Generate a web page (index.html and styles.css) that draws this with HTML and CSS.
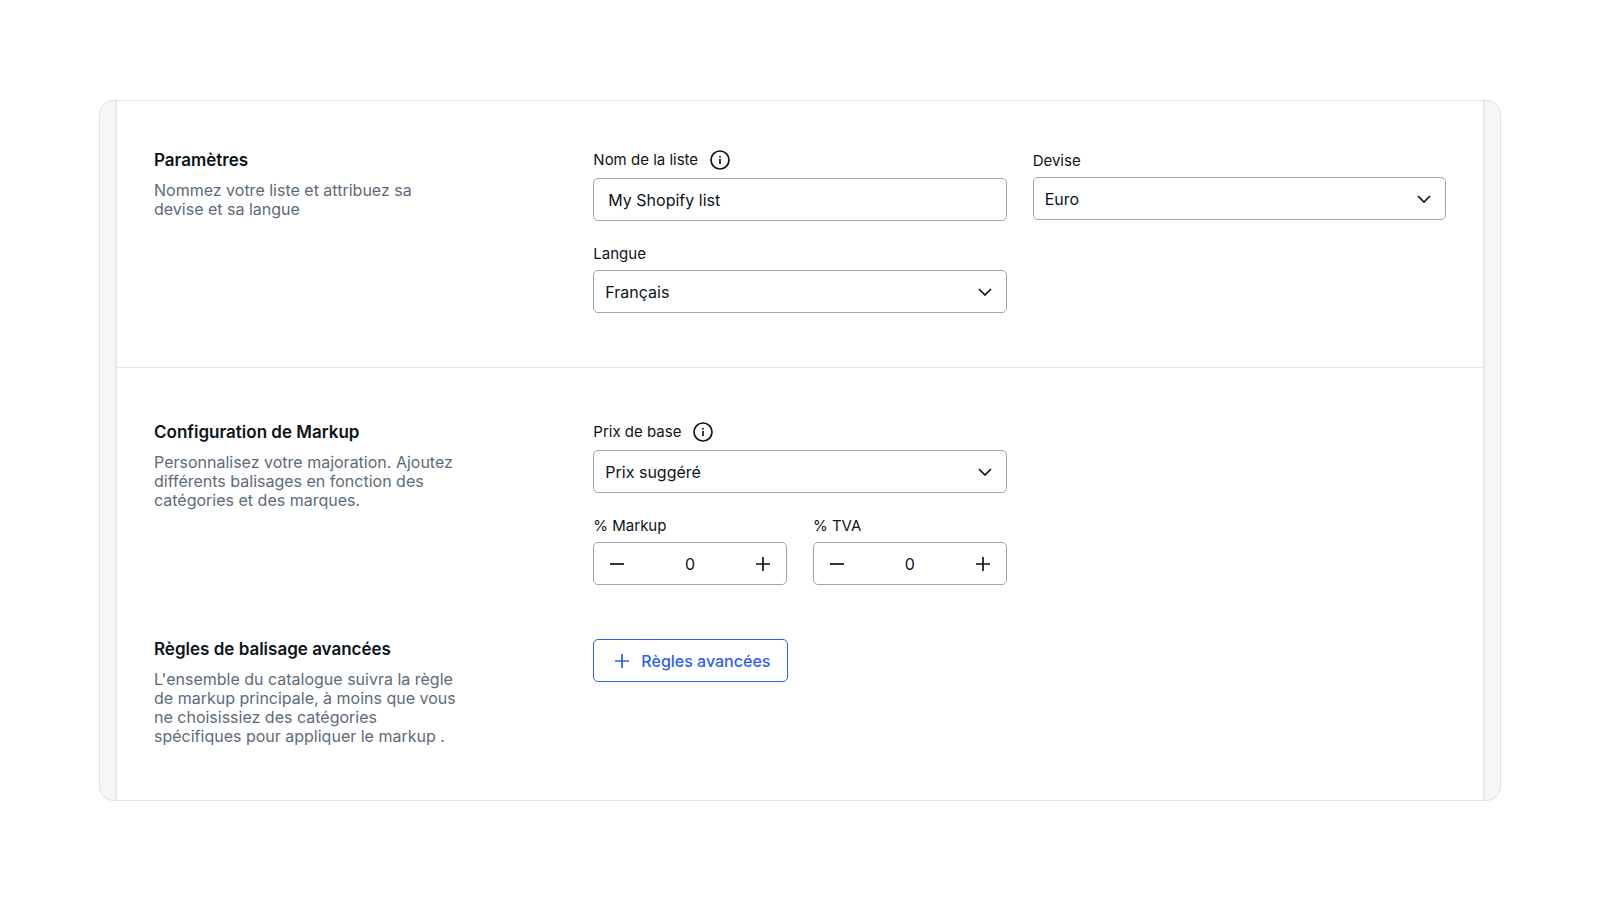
FILE: index.html
```html
<!DOCTYPE html>
<html lang="fr">
<head>
<meta charset="utf-8">
<meta name="viewport" content="width=device-width, initial-scale=1">
<title>Paramètres de la liste</title>
<link rel="stylesheet" href="styles.css">
</head>
<body>
<main class="frame">
  <form class="panel">
    <section class="section section-settings">
      <div class="intro">
        <h2 class="title">Paramètres</h2>
        <p class="description">Nommez votre liste et attribuez sa devise et sa langue</p>
      </div>
      <div class="fields">
        <div class="field">
          <div class="label-row">
            <label class="label" for="list-name">Nom de la liste</label>
            <svg class="info" viewBox="0 0 20 20" aria-hidden="true"><circle cx="10" cy="10" r="9"/><path d="M10 9v5M10 6v1.6"/></svg>
          </div>
          <input class="control text-input" id="list-name" type="text" value="My Shopify list">
        </div>
        <div class="field">
          <label class="label" for="currency">Devise</label>
          <div class="select-wrap">
            <select class="control select" id="currency"><option>Euro</option></select>
            <svg class="chevron" viewBox="0 0 14 8" aria-hidden="true"><path d="M1 1l6 6 6-6"/></svg>
          </div>
        </div>
        <div class="field">
          <label class="label" for="language">Langue</label>
          <div class="select-wrap">
            <select class="control select" id="language"><option>Français</option></select>
            <svg class="chevron" viewBox="0 0 14 8" aria-hidden="true"><path d="M1 1l6 6 6-6"/></svg>
          </div>
        </div>
      </div>
    </section>

    <section class="section section-markup">
      <div class="intro">
        <h2 class="title">Configuration de Markup</h2>
        <p class="description">Personnalisez votre majoration. Ajoutez différents balisages en fonction des catégories et des marques.</p>
      </div>
      <div class="fields">
        <div class="field">
          <div class="label-row">
            <label class="label" for="base-price">Prix de base</label>
            <svg class="info" viewBox="0 0 20 20" aria-hidden="true"><circle cx="10" cy="10" r="9"/><path d="M10 9v5M10 6v1.6"/></svg>
          </div>
          <div class="select-wrap">
            <select class="control select" id="base-price"><option>Prix suggéré</option></select>
            <svg class="chevron" viewBox="0 0 14 8" aria-hidden="true"><path d="M1 1l6 6 6-6"/></svg>
          </div>
        </div>
        <div class="stepper-row">
          <div class="field">
            <label class="label" for="markup">% Markup</label>
            <div class="control stepper">
              <button class="step" type="button" aria-label="Diminuer"><svg viewBox="0 0 16 16" aria-hidden="true"><path d="M1 8h14"/></svg></button>
              <input class="amount" id="markup" type="text" inputmode="numeric" value="0">
              <button class="step" type="button" aria-label="Augmenter"><svg viewBox="0 0 16 16" aria-hidden="true"><path d="M1 8h14M8 1v14"/></svg></button>
            </div>
          </div>
          <div class="field">
            <label class="label" for="vat">% TVA</label>
            <div class="control stepper">
              <button class="step" type="button" aria-label="Diminuer"><svg viewBox="0 0 16 16" aria-hidden="true"><path d="M1 8h14"/></svg></button>
              <input class="amount" id="vat" type="text" inputmode="numeric" value="0">
              <button class="step" type="button" aria-label="Augmenter"><svg viewBox="0 0 16 16" aria-hidden="true"><path d="M1 8h14M8 1v14"/></svg></button>
            </div>
          </div>
        </div>
      </div>
    </section>

    <section class="section section-rules">
      <div class="intro">
        <h2 class="title">Règles de balisage avancées</h2>
        <p class="description">L'ensemble du catalogue suivra la règle de markup principale, à moins que vous ne choisissiez des catégories spécifiques pour appliquer le markup .</p>
      </div>
      <div class="fields">
        <div class="field">
          <button class="rules-button" type="button">
            <svg viewBox="0 0 16 16" aria-hidden="true"><path d="M1 8h14M8 1v14"/></svg>
            Règles avancées
          </button>
        </div>
      </div>
    </section>
  </form>
</main>
</body>
</html>
```
FILE: styles.css
```css
* {
  box-sizing: border-box;
}

body {
  margin: 0;
  padding: 100px 99px;
  background: #fff;
  color: #0b141a;
  font-family: Inter, "Liberation Sans", sans-serif;
  font-size: 16px;
}

button,
input,
select {
  margin: 0;
  color: inherit;
  font: inherit;
}

svg {
  display: block;
  fill: none;
  stroke: currentColor;
  stroke-width: 1.7;
}

.frame {
  padding: 0 15px;
  overflow: hidden;
  border: 1px solid #e0e2e5;
  border-radius: 14px;
  background: #f5f6f8;
}

.panel {
  border: solid #e5e8eb;
  border-width: 0 2px;
  background: #fff;
}

.section {
  display: grid;
  grid-template-columns: repeat(3, minmax(0, 1fr));
  column-gap: 26px;
  padding: 49px 37px 54px;
}

.fields {
  display: grid;
  grid-column: span 2;
  grid-template-columns: repeat(2, minmax(0, 1fr));
  align-items: start;
  gap: 22px 26px;
}

.section-markup {
  padding-top: 54px;
  border-top: 1px solid #e5e8eb;
}

.section-markup .field,
.stepper-row {
  grid-column: 1;
}

.section-rules {
  padding-top: 0;
}

.title {
  margin: 0 0 11px;
  font-size: 17px;
  font-weight: 600;
  line-height: 20px;
}

.description {
  max-width: 308px;
  margin: 0;
  color: #5c6b7a;
  line-height: 19px;
}

.field {
  display: flex;
  flex-direction: column;
  gap: 5px;
}

.label-row {
  display: flex;
  align-items: center;
  gap: 12px;
  height: 20px;
  margin-bottom: 3px;
}

.label {
  font-size: 15px;
  line-height: 22px;
}

.info {
  width: 20px;
  height: 20px;
}

.control {
  width: 100%;
  height: 43px;
  border: 1px solid #98a6b8;
  border-radius: 5px;
  background: #fff;
}

.text-input {
  padding: 0 14px;
}

.select-wrap {
  display: grid;
  align-items: center;
}

.select,
.chevron {
  grid-area: 1 / 1;
}

.select {
  padding: 0 40px 0 11px;
  appearance: none;
}

.chevron {
  justify-self: end;
  width: 14px;
  height: 8px;
  margin-right: 15px;
  pointer-events: none;
}

.stepper-row {
  display: grid;
  grid-template-columns: repeat(2, minmax(0, 1fr));
  gap: 26px;
}

.stepper-row .field {
  grid-column: auto;
}

.stepper {
  display: flex;
  align-items: center;
  padding: 0 8px;
}

.step {
  padding: 7px;
  border: 0;
  background: none;
}

.step svg {
  width: 16px;
  height: 16px;
}

.amount {
  flex: 1;
  min-width: 0;
  padding: 0;
  border: 0;
  background: none;
  text-align: center;
}

.rules-button {
  display: flex;
  align-items: center;
  align-self: start;
  gap: 11px;
  height: 43px;
  padding: 0 17px 0 20px;
  border: 1px solid #2b5ff0;
  border-radius: 5px;
  background: #fff;
  color: #2b5ff0;
  font-weight: 500;
}

.rules-button svg {
  width: 16px;
  height: 16px;
}
```
